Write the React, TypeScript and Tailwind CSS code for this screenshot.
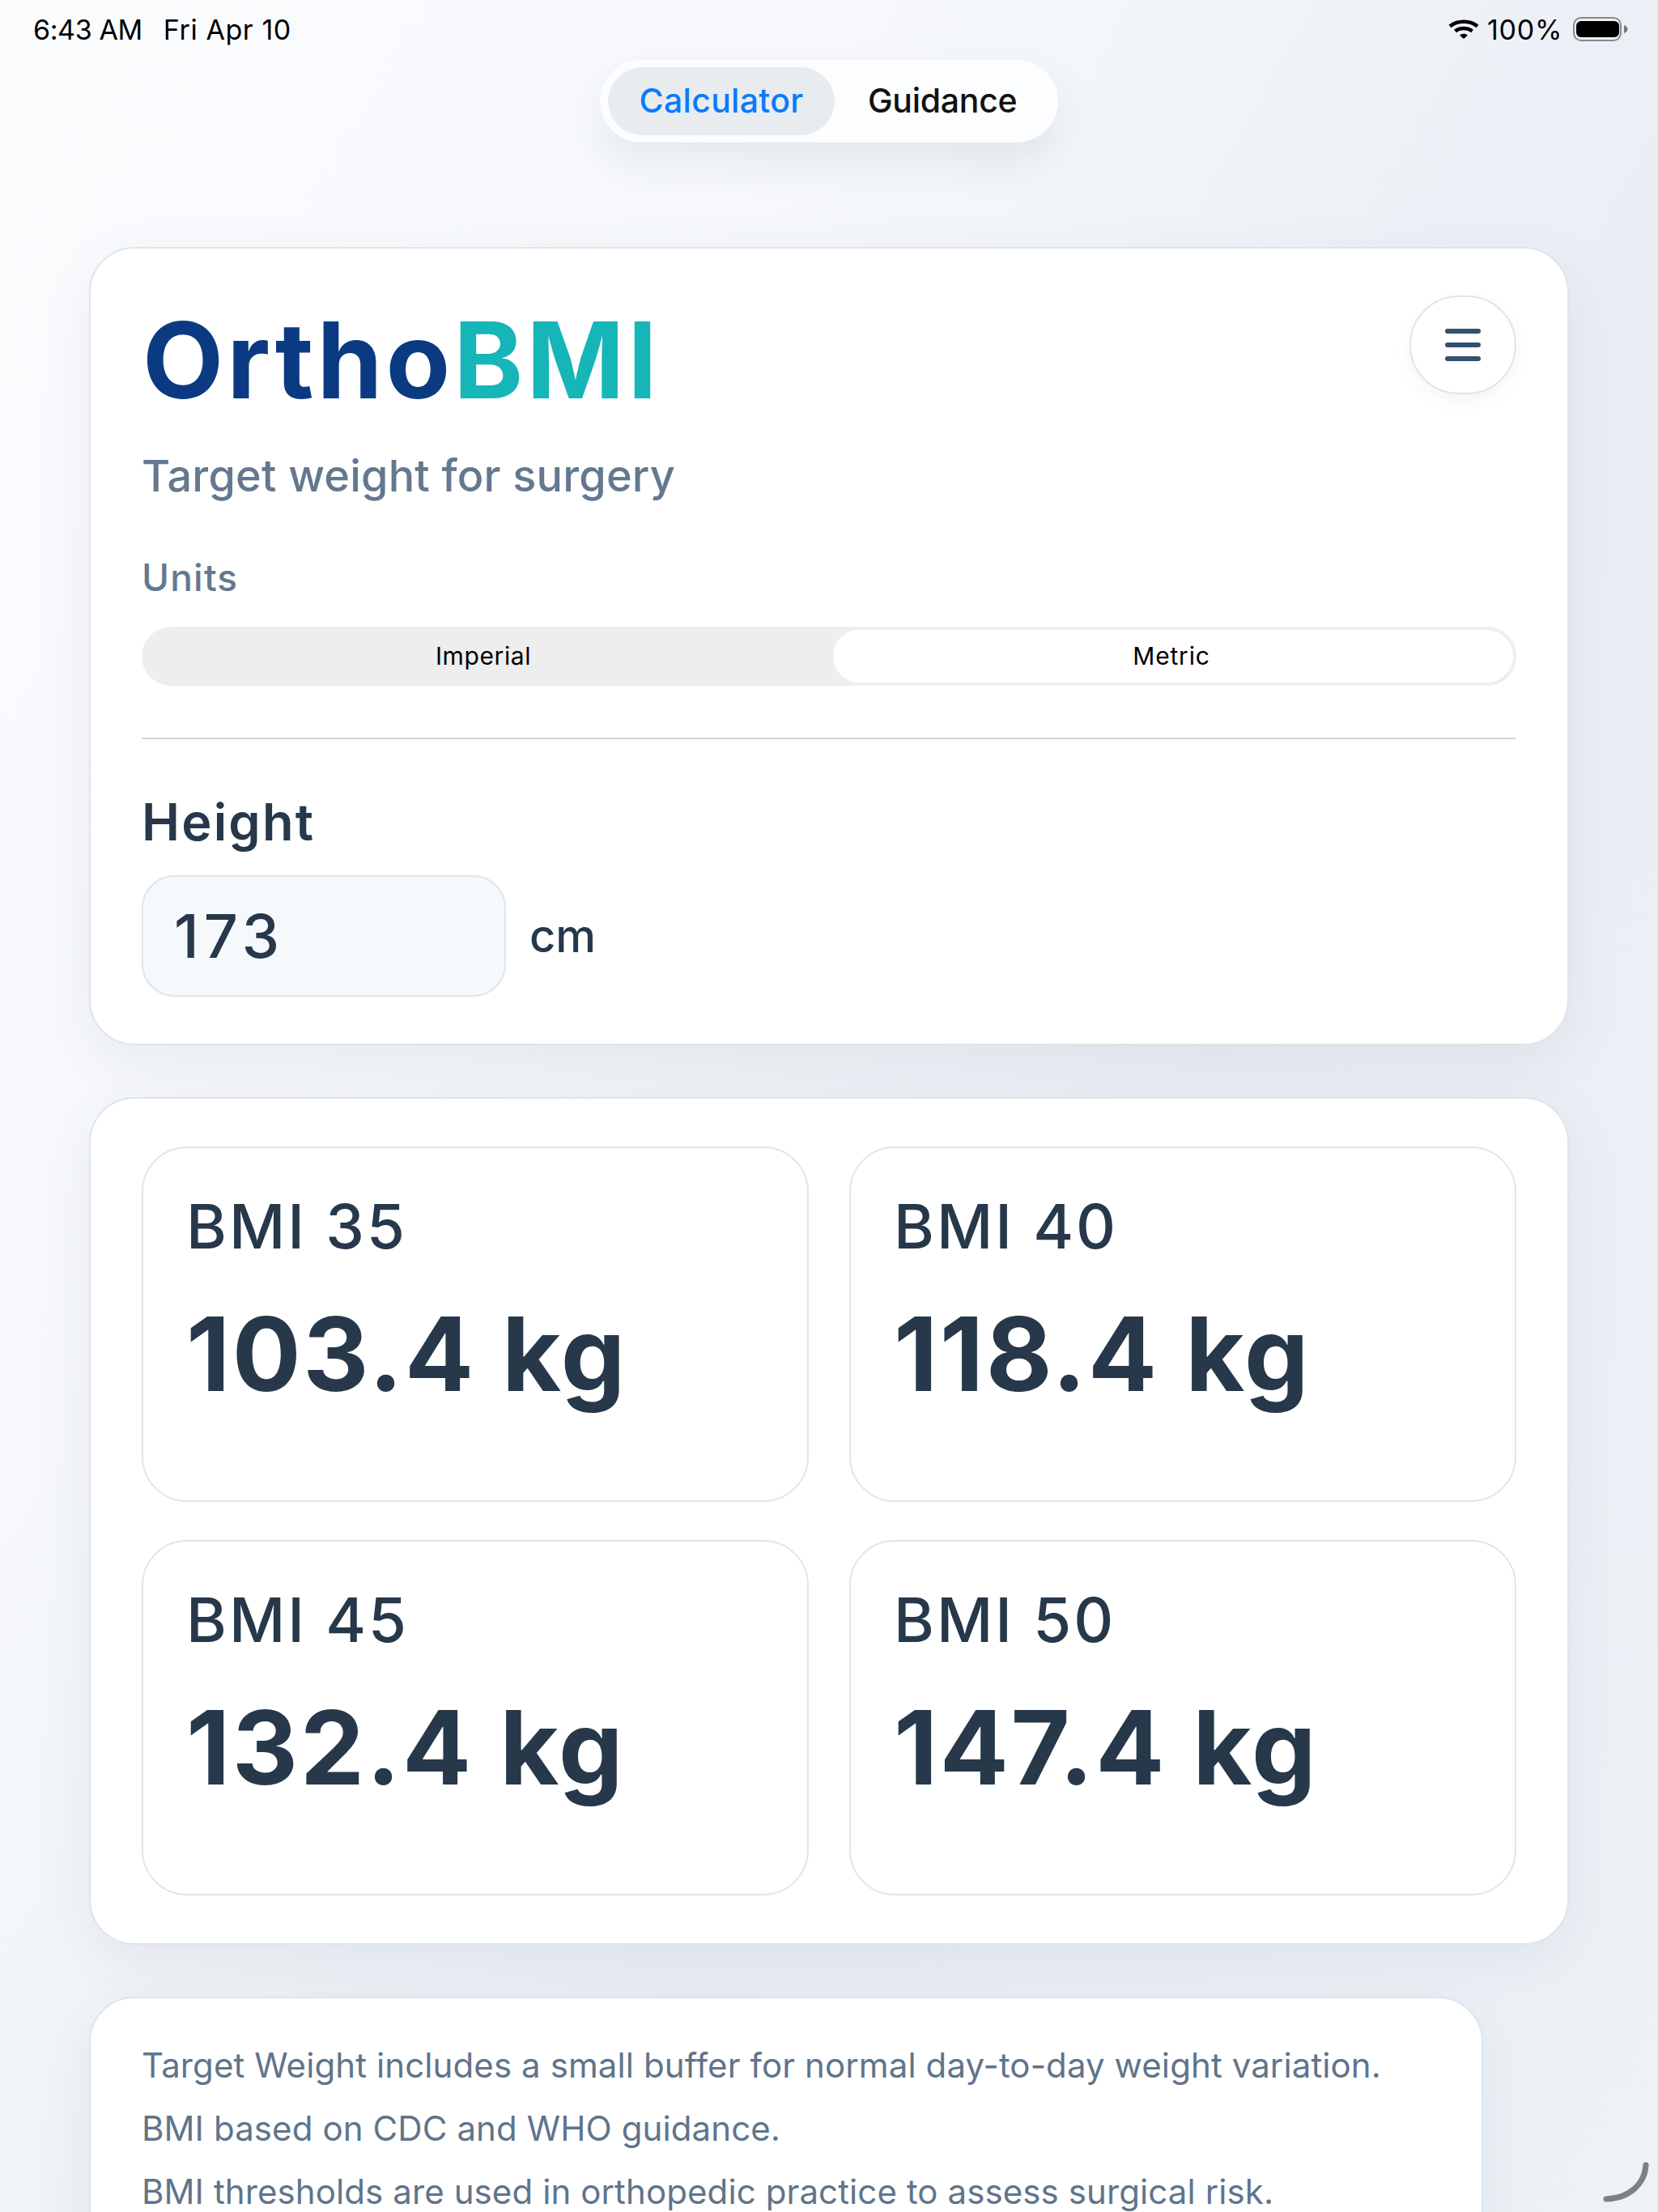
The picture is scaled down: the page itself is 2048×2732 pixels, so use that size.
const Cell = ({ label, value }: { label: string; value: string }) => (
  <div className="h-[439px] rounded-[56px] border-2 border-[#dfe6ee] bg-white pl-[53px] pt-[50px]">
    <div className="text-[76px] leading-[92px] font-medium tracking-[3px] text-[#26384a]">{label}</div>
    <div className="mt-[42px] text-[126px] leading-[140px] font-bold tracking-[2.5px] text-[#26384a]">{value}</div>
  </div>
);

export default function App() {
  return (
    <div
      className="relative h-[2732px] w-[2048px] overflow-hidden bg-[linear-gradient(120deg,#fbfcfe_0%,#f6f8fb_30%,#e9eef5_62%,#edf2f7_100%)] text-black"
      style={{ fontFamily: 'Inter, "Noto Sans", sans-serif' }}
    >
      <div className="flex h-[72px] items-center justify-between pl-[41px] pr-[37px] text-[34px]">
        <div className="flex gap-[26px]">
          <span className="tracking-[-0.4px]">6:43 AM</span>
          <span className="tracking-[0.6px]">Fri Apr 10</span>
        </div>
        <div className="flex items-center">
          <svg width="38" height="24" viewBox="0 0 38 24" fill="none" stroke="black" strokeWidth="4.5">
            <path d="M2 8.5C11 0.8 27 0.8 36 8.5" />
            <path d="M8.5 14.5C14 9.8 24 9.8 29.5 14.5" />
            <path d="M14 19.5L19 24L24 19.5C21 17 17 17 14 19.5Z" fill="black" stroke="none" />
          </svg>
          <span className="ml-[10px] tracking-[0.7px]">100%</span>
          <svg className="ml-[13px]" width="68" height="30" viewBox="0 0 68 30" fill="none">
            <rect x="1" y="1" width="58" height="28" rx="9" stroke="#8a8a8a" strokeWidth="2" />
            <rect x="4" y="5" width="53" height="20" rx="6" fill="black" />
            <path d="M63 10C66 11 67.5 13 67.5 15C67.5 17 66 19 63 20Z" fill="#777777" />
          </svg>
        </div>
      </div>

      <div className="flex justify-center">
        <div className="mt-[2px] flex h-[102px] w-[566px] items-center rounded-[51px] bg-[#fbfdff] pl-[10px] text-[41px] font-medium shadow-[0_24px_50px_rgba(60,75,95,0.09)]">
          <div className="flex h-[84px] w-[280px] items-center justify-center rounded-[42px] bg-[#e9ecee] tracking-[0.3px] text-[#0a7aff]">Calculator</div>
          <div className="ml-[41px] tracking-[-0.3px] text-[#111]">Guidance</div>
        </div>
      </div>

      <div className="mt-[129px] ml-[110px] w-[1828px] rounded-[56px] border-2 border-[#dde5ee] bg-white px-[63px] pt-[50px] pb-[58px] shadow-[0_20px_70px_rgba(60,75,95,0.08)]">
        <div className="flex justify-between">
          <div className="mt-[13px] ml-[1px] text-[130px] leading-[150px] font-bold tracking-[4px]">
            <span className="text-[#0b3a82]">Ortho</span>
            <span className="text-[#16b5b8]">BMI</span>
          </div>
          <div className="mt-[8px] flex h-[122px] w-[132px] flex-col items-center justify-center gap-[11px] rounded-full border-2 border-[#dde5ee] bg-white shadow-[0_8px_20px_rgba(70,90,120,0.06)]">
            <div className="h-[6px] w-[44px] rounded-full bg-[#33506e]" />
            <div className="h-[6px] w-[44px] rounded-full bg-[#33506e]" />
            <div className="h-[6px] w-[44px] rounded-full bg-[#33506e]" />
          </div>
        </div>
        <div className="mt-[36px] text-[54px] leading-[64px] font-medium tracking-[0.2px] text-[#64788f]">Target weight for surgery</div>
        <div className="mt-[65px] text-[46px] leading-[56px] font-medium tracking-[1.2px] text-[#64788f]">Units</div>
        <div className="mt-[33px] flex h-[73px] rounded-full bg-[#eeeeee]">
          <div className="flex flex-1 items-center justify-center pr-[6px] text-[30px] tracking-[0.6px]">Imperial</div>
          <div className="flex w-[848px] items-center justify-center rounded-full border-[4px] border-[#eeeeee] bg-white pr-[4px] text-[30px] tracking-[0.8px]">Metric</div>
        </div>
        <div className="mt-[64px] h-[2px] bg-[#cfd5dc]" />
        <div className="mt-[64px] text-[63px] leading-[76px] font-semibold tracking-[2.2px] text-[#26384a]">Height</div>
        <div className="mt-[28px] flex items-center">
          <div className="flex h-[150px] w-[450px] items-center rounded-[40px] border-2 border-[#dde5ee] bg-[#f6f9fc] pl-[38px] text-[74px] font-medium tracking-[6px] text-[#26384a]">173</div>
          <div className="ml-[29px] text-[56px] font-medium text-[#26384a]">cm</div>
        </div>
      </div>

      <div className="mt-[64px] ml-[110px] w-[1828px] rounded-[56px] border-2 border-[#dde5ee] bg-white px-[63px] pt-[59px] pb-[59px] shadow-[0_20px_70px_rgba(60,75,95,0.08)]">
        <div className="grid grid-cols-2 gap-x-[50px] gap-y-[47px]">
          <Cell label="BMI 35" value="103.4 kg" />
          <Cell label="BMI 40" value="118.4 kg" />
          <Cell label="BMI 45" value="132.4 kg" />
          <Cell label="BMI 50" value="147.4 kg" />
        </div>
      </div>

      <div className="mt-[64px] ml-[110px] w-[1722px] rounded-[56px] border-2 border-[#dde5ee] bg-white px-[63px] pt-[44px] pb-[60px] text-[42px] leading-[78px] tracking-[0.1px] text-[#5f748b] shadow-[0_20px_70px_rgba(60,75,95,0.08)]">
        <div>Target Weight includes a small buffer for normal day-to-day weight variation.</div>
        <div>BMI based on CDC and WHO guidance.</div>
        <div>BMI thresholds are used in orthopedic practice to assess surgical risk.</div>
      </div>

      <svg className="absolute left-[1978px] top-[2668px]" width="60" height="54" viewBox="0 0 60 54" fill="none">
        <path d="M55 6C54 28 36 47 6 48" stroke="#808080" strokeWidth="7" strokeLinecap="round" />
      </svg>
    </div>
  );
}
